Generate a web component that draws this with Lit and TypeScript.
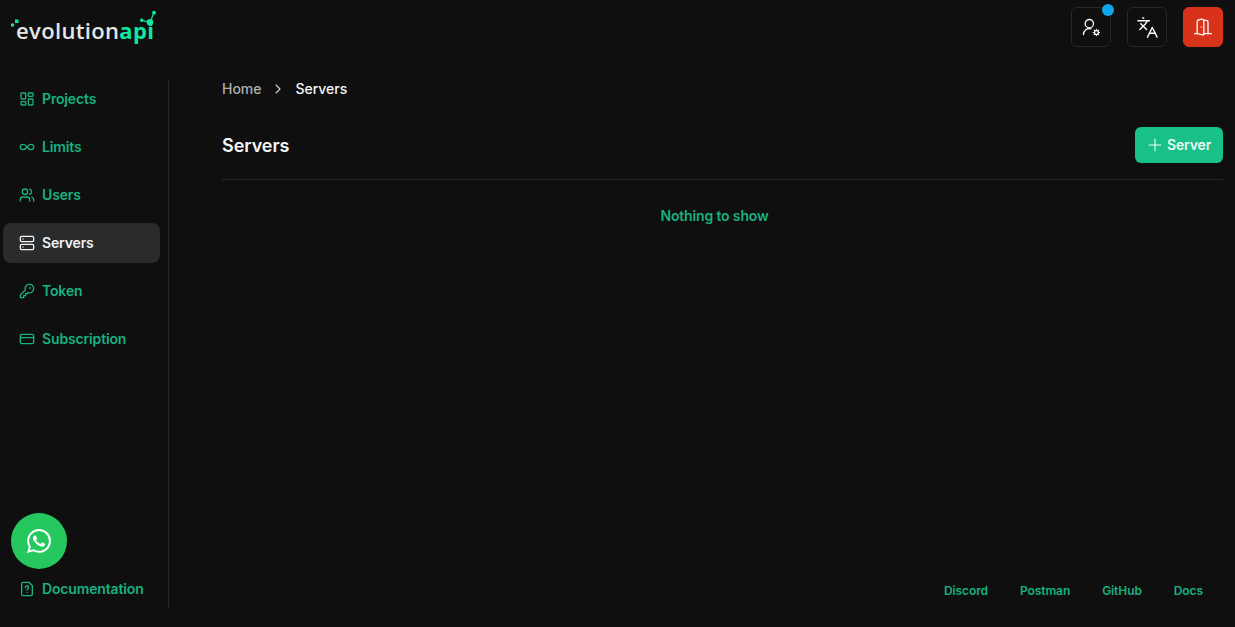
import { LitElement, html, css, svg } from "lit";
import { customElement } from "lit/decorators.js";

const ic = (body: unknown, cls = "") => html`<svg class="ic ${cls}" viewBox="0 0 24 24" fill="none" stroke="currentColor" stroke-width="2" stroke-linecap="round" stroke-linejoin="round">${body}</svg>`;

const icons: Record<string, unknown> = {
  Projects: svg`<rect x="3" y="3" width="7" height="9" rx="1"/><rect x="14" y="3" width="7" height="5" rx="1"/><rect x="14" y="12" width="7" height="9" rx="1"/><rect x="3" y="16" width="7" height="5" rx="1"/>`,
  Limits: svg`<path d="M12 12c-2-2.67-4-4-6-4a4 4 0 1 0 0 8c2 0 4-1.33 6-4Zm0 0c2 2.67 4 4 6 4a4 4 0 0 0 0-8c-2 0-4 1.33-6 4Z"/>`,
  Users: svg`<path d="M16 21v-2a4 4 0 0 0-4-4H6a4 4 0 0 0-4 4v2"/><circle cx="9" cy="7" r="4"/><path d="M22 21v-2a4 4 0 0 0-3-3.87"/><path d="M16 3.13a4 4 0 0 1 0 7.75"/>`,
  Servers: svg`<rect x="2" y="2" width="20" height="8" rx="2"/><rect x="2" y="14" width="20" height="8" rx="2"/><line x1="6" y1="6" x2="6.01" y2="6"/><line x1="6" y1="18" x2="6.01" y2="18"/>`,
  Token: svg`<path d="M2 18v3c0 .6.4 1 1 1h4v-3h3v-3h2l1.4-1.4a6.5 6.5 0 1 0-4-4Z"/><circle cx="16.5" cy="7.5" r=".5"/>`,
  Subscription: svg`<rect x="2" y="5" width="20" height="14" rx="2"/><line x1="2" y1="10" x2="22" y2="10"/>`,
};
const nav = ["Projects", "Limits", "Users", "Servers", "Token", "Subscription"];

@customElement("app-root")
export class AppRoot extends LitElement {
  static styles = css`
    :host { display: grid; grid-template-columns: 169px 1fr; grid-template-rows: 79px 1fr; height: 100vh; background: #0f0f0f; font-family: Inter, "Liberation Sans", sans-serif; overflow: hidden; position: relative; }
    .ic { width: 16px; height: 16px; flex: none; }
    header { grid-column: 1 / 3; display: flex; justify-content: space-between; align-items: flex-start; padding: 7px 12px 0 11px; }
    .logo { position: relative; width: 150px; height: 40px; }
    .word { position: absolute; left: 5px; top: 9px; font-family: "Open Sans", sans-serif; font-weight: 600; font-size: 22px; line-height: 28px; letter-spacing: 0.35px; color: #e6e6e6; white-space: nowrap; }
    .word b { font-weight: 700; color: #0ce8a0; }
    .logo svg { position: absolute; left: 0; top: -7px; width: 150px; height: 40px; }
    .actions { display: flex; gap: 16px; }
    .btn { position: relative; width: 40px; height: 40px; box-sizing: border-box; border: 1px solid #272727; border-radius: 6px; display: flex; align-items: center; justify-content: center; color: #fafafa; background: #0f0f0f; }
    .btn .ic { width: 20px; height: 20px; stroke-width: 1.6; }
    .btn .ic.lg { width: 23px; height: 23px; stroke-width: 1.5; }
    .btn.red { background: #d9321a; border-color: #d9321a; }
    .dot { position: absolute; right: -4px; top: -4px; width: 12px; height: 12px; border-radius: 50%; background: #0ea5e9; }
    aside { display: flex; flex-direction: column; height: 530px; border-right: 1px solid #272727; box-sizing: border-box; gap: 8px; padding-right: 8px; }
    .item { height: 40px; display: flex; align-items: center; gap: 7px; padding-left: 16px; margin-left: 3px; border-radius: 8px; font-size: 14px; font-weight: 600; letter-spacing: -0.15px; color: #18b180; }
    .item span { padding-bottom: 2px; }
    .item.active { background: #2a2b2d; color: #f2f2f2; }
    .spacer { flex: 1; }
    .wa { position: absolute; left: 11px; top: 513px; width: 56px; height: 56px; border-radius: 50%; background: #25c85f; display: flex; align-items: center; justify-content: center; }
    .wa svg { width: 24px; height: 24px; fill: #fff; }
    main { display: flex; flex-direction: column; padding: 0 12px 18px 53px; min-width: 0; }
    .crumbs { height: 20px; display: flex; align-items: center; gap: 9px; font-size: 14px; font-weight: 500; letter-spacing: -0.02px; color: #b0b0b0; }
    .crumbs span { padding-bottom: 2px; }
    .crumbs .ic { color: #d0d0d0; stroke-width: 1.6; }
    .crumbs span:last-child { color: #f5f5f5; }
    .head { margin-top: 28px; padding-bottom: 16px; border-bottom: 1px solid #272727; display: flex; justify-content: space-between; align-items: center; }
    h1 { margin: 0; padding-top: 2px; font-size: 18px; font-weight: 600; letter-spacing: -0.05px; color: #f5f5f5; line-height: 34px; }
    .add { height: 36px; width: 88px; box-sizing: border-box; padding-left: 10px; background: #19c087; border-radius: 6px; color: #ecfdf5; font-size: 14px; font-weight: 600; letter-spacing: -0.15px; display: flex; align-items: center; gap: 2px; }
    .add span { padding-bottom: 2px; }
    .add .ic { width: 20px; height: 20px; stroke-width: 1.3; }
    .empty { margin-top: 26px; padding-right: 16px; text-align: center; font-size: 14px; line-height: 20px; font-weight: 600; letter-spacing: -0.15px; color: #18b180; }
    footer { margin-top: auto; display: flex; justify-content: flex-end; gap: 32px; padding-right: 20px; font-size: 12px; line-height: 20px; font-weight: 600; letter-spacing: -0.09px; color: #18b180; position: relative; top: -8px; }
  `;

  render() {
    return html`
      <header>
        <div class="logo">
          <span class="word">evolution<b>api</b></span>
          <svg viewBox="0 0 150 40">
            <rect x="0" y="23.500" width="3" height="3" fill="#0ce8a0"/><rect x="4" y="19.500" width="3.500" height="3.500" fill="#0ce8a0"/>
            <path d="M130.700 20.300 L139 22.300 L143 12.700" stroke="#0ce8a0" stroke-width="1.200" fill="none"/>
            <circle cx="130.700" cy="20.300" r="1.700" fill="#0ce8a0"/><circle cx="139" cy="22.300" r="3.200" fill="#0ce8a0"/><circle cx="143" cy="12.700" r="2" fill="#0ce8a0"/>
          </svg>
        </div>
        <div class="actions">
          <div class="btn">
            ${ic(svg`<circle cx="10" cy="8" r="5"/><path d="M3 21a7 7 0 0 1 9-6.700"/><circle cx="18.500" cy="18.500" r="2.300" stroke-width="1.500"/><path d="M18.500 14.700v1M18.500 21.300v1M14.700 18.500h1M21.300 18.500h1M15.800 15.800l.700.700M20.500 20.500l.700.700M21.200 15.800l-.700.700M16.500 20.500l-.700.700" stroke-width="1.300"/>`)}
            <span class="dot"></span>
          </div>
          <div class="btn">${ic(svg`<path d="m5 8 6 6"/><path d="m4 14 6-6 2-3"/><path d="M2 5h12"/><path d="M7 2h1"/><path d="m22 22-5-10-5 10"/><path d="M14 18h6"/>`, "lg")}</div>
          <div class="btn red">${ic(svg`<path d="M13 4h3a2 2 0 0 1 2 2v14"/><path d="M2 20h3"/><path d="M13 20h9"/><path d="M10 12v.01"/><path d="M13 4.560v16.010a1 1 0 0 1-1.240.970L5 20V5.560a2 2 0 0 1 1.510-1.940l4-1A2 2 0 0 1 13 4.560Z"/>`)}</div>
        </div>
      </header>
      <aside>
        ${nav.map((n) => html`<div class="item ${n === "Servers" ? "active" : ""}">${ic(icons[n])}<span>${n}</span></div>`)}
        <div class="spacer"></div>
        <div class="item">${ic(svg`<path d="M15 2H6a2 2 0 0 0-2 2v16a2 2 0 0 0 2 2h12a2 2 0 0 0 2-2V7Z"/><path d="M9.500 10a2.500 2.500 0 0 1 5 0c0 1.700-2.500 2-2.500 3.500"/><path d="M12 17h.01"/>`)}<span>Documentation</span></div>
      </aside>
      <div class="wa">
        <svg viewBox="0 0 24 24"><path d="M17.470 14.380c-.300-.150-1.760-.870-2.030-.970-.270-.100-.470-.150-.670.150-.200.300-.770.970-.940 1.160-.170.200-.350.220-.650.070-.300-.150-1.260-.460-2.390-1.470-.880-.790-1.480-1.760-1.650-2.060-.170-.300-.020-.460.130-.610.130-.130.300-.350.450-.520.150-.170.200-.300.300-.500.100-.200.050-.370-.020-.520-.080-.150-.670-1.620-.920-2.210-.240-.580-.490-.500-.670-.510h-.570c-.200 0-.520.070-.790.370-.270.300-1.040 1.020-1.040 2.480s1.060 2.880 1.210 3.080c.150.200 2.100 3.200 5.080 4.480.710.310 1.260.490 1.690.630.710.230 1.360.190 1.870.120.570-.090 1.760-.720 2.010-1.420.250-.690.250-1.290.170-1.420-.070-.120-.270-.200-.570-.350M12.050 21.790h-.010a9.870 9.870 0 0 1-5.030-1.380l-.360-.210-3.740.980 1-3.650-.240-.370a9.860 9.860 0 0 1-1.510-5.260c0-5.450 4.440-9.880 9.890-9.880a9.820 9.820 0 0 1 6.990 2.900 9.830 9.830 0 0 1 2.890 6.990c0 5.450-4.440 9.880-9.880 9.880M20.460 3.490A11.820 11.820 0 0 0 12.050 0C5.500 0 .160 5.340.160 11.890c0 2.100.550 4.140 1.590 5.950L.060 24l6.310-1.650a11.880 11.880 0 0 0 5.680 1.450h.010c6.550 0 11.890-5.340 11.890-11.890a11.820 11.820 0 0 0-3.480-8.410"/></svg>
      </div>
      <main>
        <div class="crumbs"><span>Home</span>${ic(svg`<path d="m9 18 6-6-6-6"/>`)}<span>Servers</span></div>
        <div class="head">
          <h1>Servers</h1>
          <div class="add">${ic(svg`<path d="M5 12h14"/><path d="M12 5v14"/>`)}<span>Server</span></div>
        </div>
        <div class="empty">Nothing to show</div>
        <footer><span>Discord</span><span>Postman</span><span>GitHub</span><span>Docs</span></footer>
      </main>
    `;
  }
}
